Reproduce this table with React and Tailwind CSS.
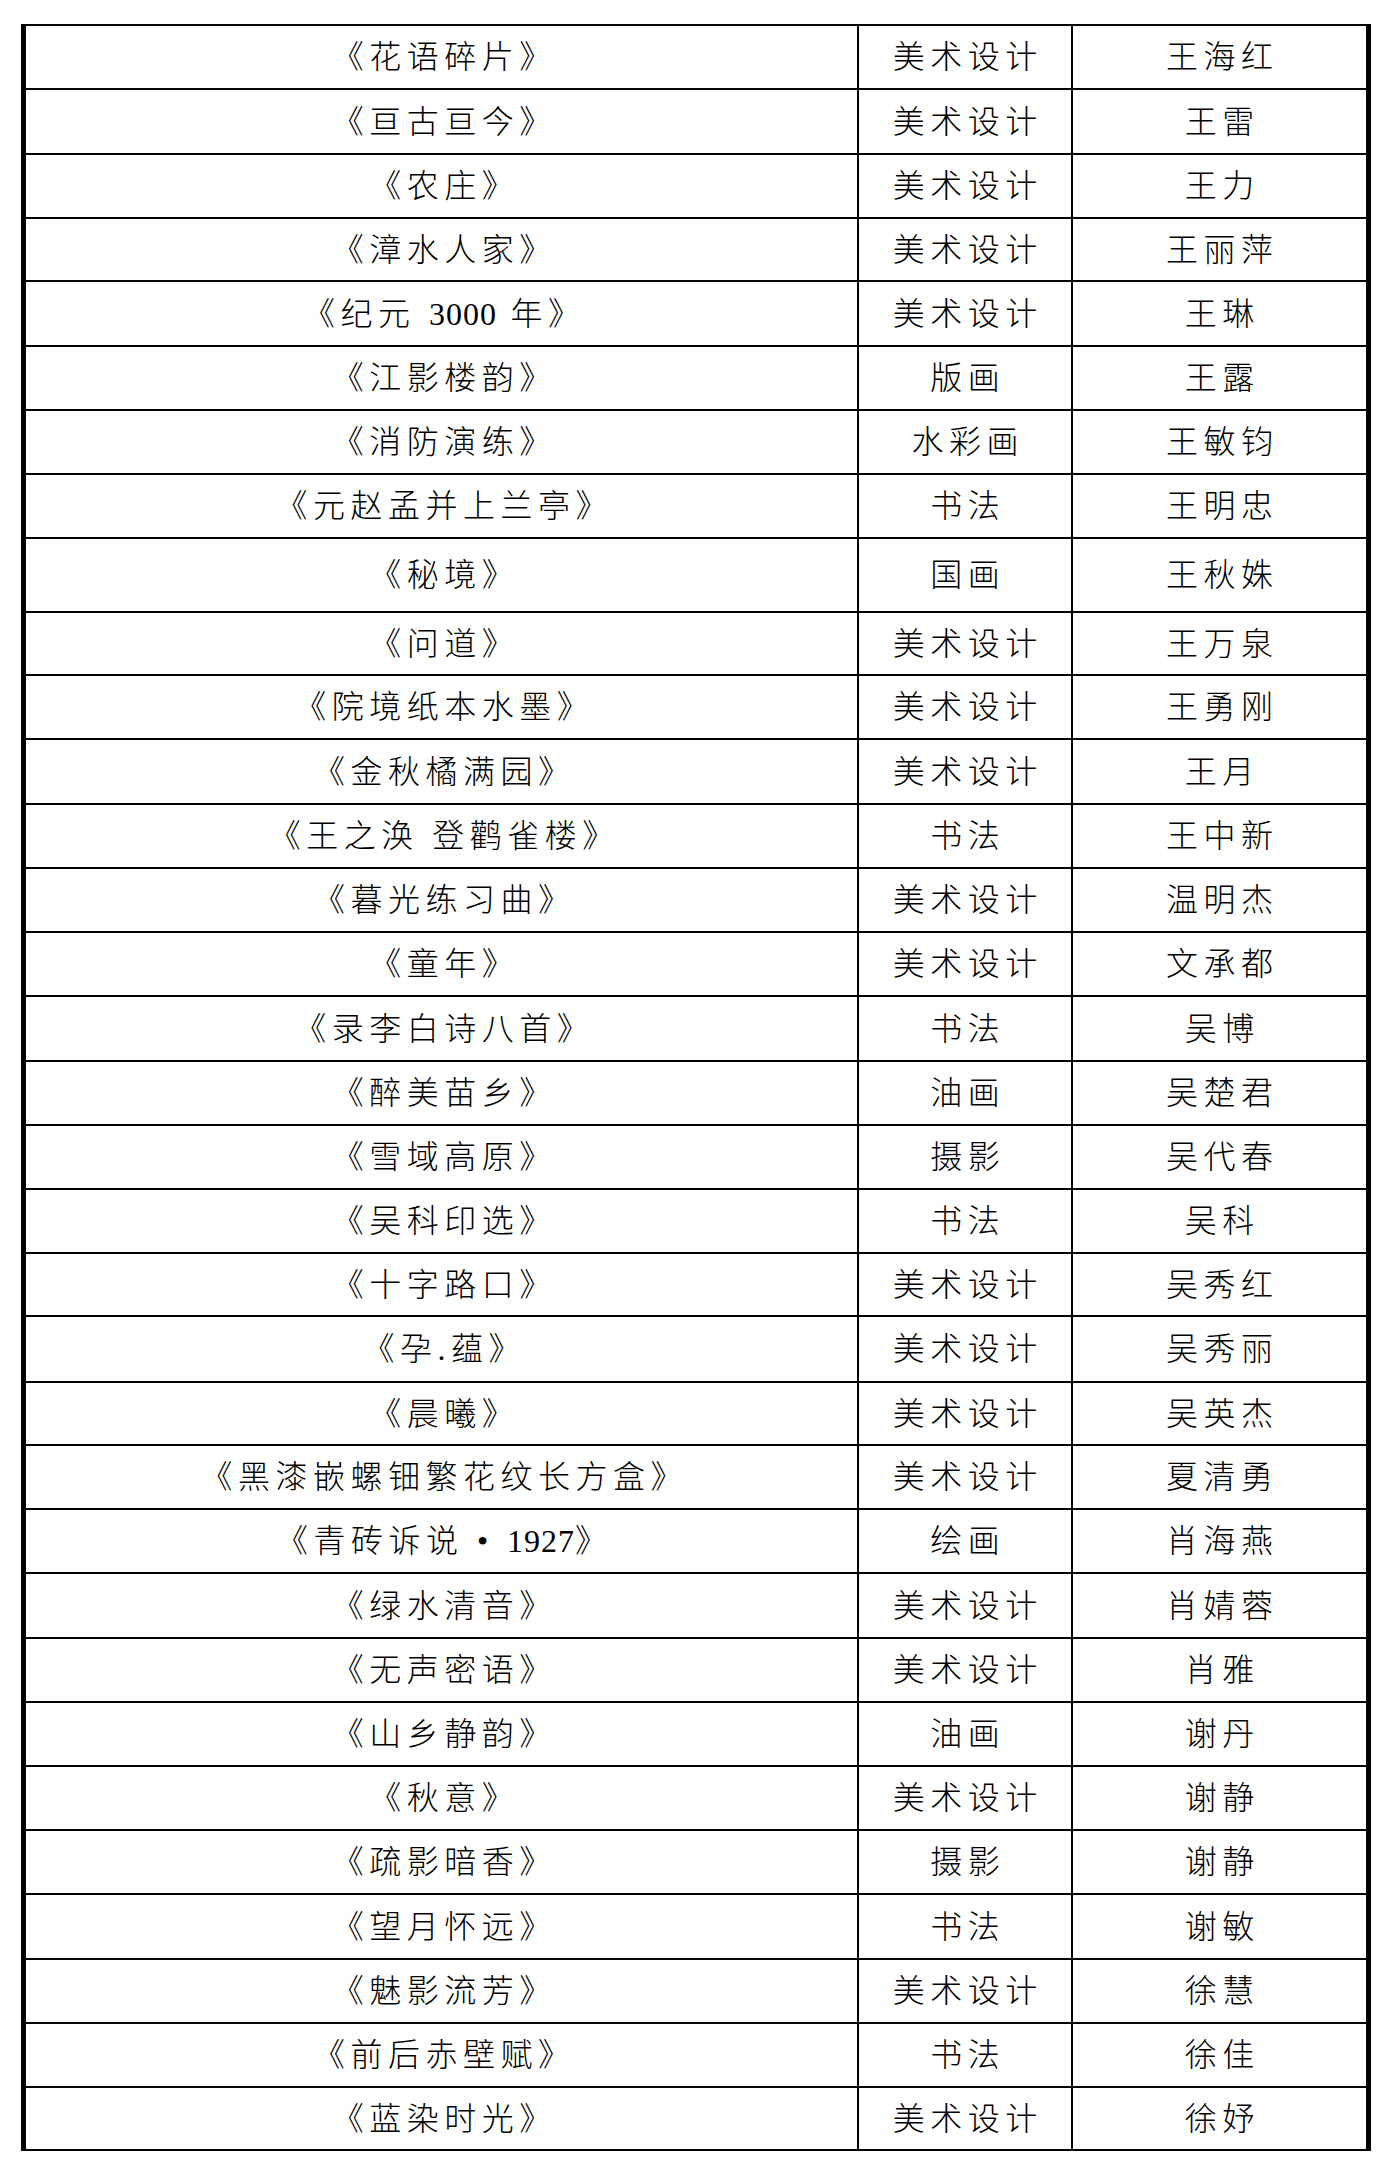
import React from "react";

const rows = [
  ["《花语碎片》", "美术设计", "王海红", "h-[64px]"],
  ["《亘古亘今》", "美术设计", "王雷", "h-[65px]"],
  ["《农庄》", "美术设计", "王力", "h-[64px]"],
  ["《漳水人家》", "美术设计", "王丽萍", "h-[63px]"],
  [["《纪元 ", "3000", " 年》"], "美术设计", "王琳", "h-[65px]"],
  ["《江影楼韵》", "版画", "王露", "h-[64px]"],
  ["《消防演练》", "水彩画", "王敏钧", "h-[64px]"],
  ["《元赵孟并上兰亭》", "书法", "王明忠", "h-[64px]"],
  ["《秘境》", "国画", "王秋姝", "h-[74px]"],
  ["《问道》", "美术设计", "王万泉", "h-[63px]"],
  ["《院境纸本水墨》", "美术设计", "王勇刚", "h-[64px]"],
  ["《金秋橘满园》", "美术设计", "王月", "h-[65px]"],
  ["《王之涣 登鹳雀楼》", "书法", "王中新", "h-[64px]"],
  ["《暮光练习曲》", "美术设计", "温明杰", "h-[64px]"],
  ["《童年》", "美术设计", "文承都", "h-[64px]"],
  ["《录李白诗八首》", "书法", "吴博", "h-[65px]"],
  ["《醉美苗乡》", "油画", "吴楚君", "h-[64px]"],
  ["《雪域高原》", "摄影", "吴代春", "h-[64px]"],
  ["《吴科印选》", "书法", "吴科", "h-[64px]"],
  ["《十字路口》", "美术设计", "吴秀红", "h-[63px]"],
  ["《孕.蕴》", "美术设计", "吴秀丽", "h-[66px]"],
  ["《晨曦》", "美术设计", "吴英杰", "h-[63px]"],
  ["《黑漆嵌螺钿繁花纹长方盒》", "美术设计", "夏清勇", "h-[64px]"],
  [["《青砖诉说 • ", "1927", "》"], "绘画", "肖海燕", "h-[64px]"],
  ["《绿水清音》", "美术设计", "肖婧蓉", "h-[65px]"],
  ["《无声密语》", "美术设计", "肖雅", "h-[64px]"],
  ["《山乡静韵》", "油画", "谢丹", "h-[64px]"],
  ["《秋意》", "美术设计", "谢静", "h-[64px]"],
  ["《疏影暗香》", "摄影", "谢静", "h-[64px]"],
  ["《望月怀远》", "书法", "谢敏", "h-[65px]"],
  ["《魅影流芳》", "美术设计", "徐慧", "h-[64px]"],
  ["《前后赤壁赋》", "书法", "徐佳", "h-[64px]"],
  ["《蓝染时光》", "美术设计", "徐妤", "h-[63px]"],
];

const cellText =
  "text-[32px] leading-none tracking-[5.5px] pl-[5.5px] text-black font-['Liberation_Serif','Noto_Sans_CJK_SC',serif] font-light whitespace-nowrap";

function Title({ t }) {
  if (Array.isArray(t)) {
    return (
      <span className={cellText}>
        {t[0]}
        <span className="tracking-[1px]">{t[1]}</span>
        {t[2]}
      </span>
    );
  }
  return <span className={cellText}>{t}</span>;
}

export default function App() {
  return (
    <div className="w-[1400px] min-h-[2176px] bg-white pt-[24px] pl-[21px]">
      <div className="w-[1350px] border-t-2 border-l-[5px] border-r-[5px] border-black">
        {rows.map(([title, cat, name, h], i) => (
          <div key={i} className={`flex border-b-2 border-black ${h}`}>
            <div className="w-[833px] shrink-0 border-r-2 border-black flex items-center justify-center">
              <Title t={title} />
            </div>
            <div className="w-[214px] shrink-0 border-r-2 border-black flex items-center justify-center">
              <span className={cellText}>{cat}</span>
            </div>
            <div className="flex-1 flex items-center justify-center">
              <span className={cellText}>{name}</span>
            </div>
          </div>
        ))}
      </div>
    </div>
  );
}
